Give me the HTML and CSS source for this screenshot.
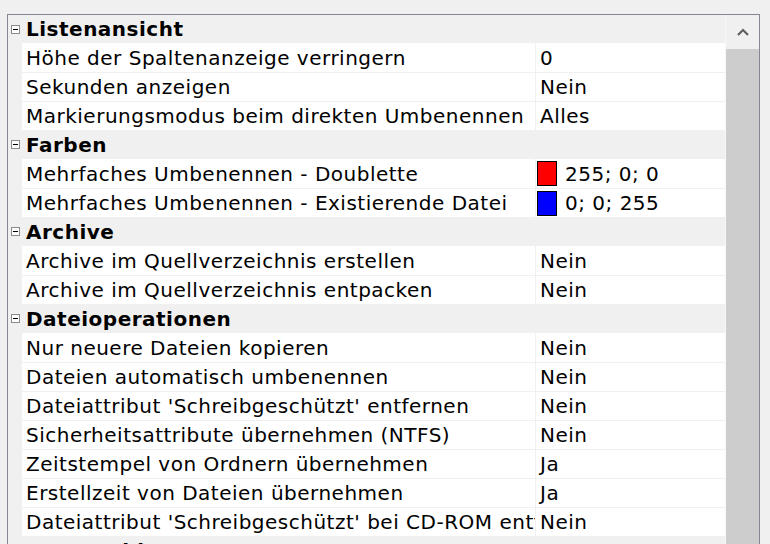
FILE: index.html
```html
<!DOCTYPE html>
<html lang="de">
<head>
<meta charset="utf-8">
<title>Eigenschaften</title>
<link rel="stylesheet" href="styles.css">
</head>
<body>
<div class="panel">
  <div class="grid">
    <div class="cat first"><span class="toggle"></span><span class="cat-label">Listenansicht</span></div>
    <div class="row"><div class="name">Höhe der Spaltenanzeige verringern</div><div class="val">0</div></div>
    <div class="row"><div class="name">Sekunden anzeigen</div><div class="val">Nein</div></div>
    <div class="row"><div class="name">Markierungsmodus beim direkten Umbenennen</div><div class="val">Alles</div></div>

    <div class="cat"><span class="toggle"></span><span class="cat-label">Farben</span></div>
    <div class="row"><div class="name">Mehrfaches Umbenennen - Doublette</div><div class="val color"><span class="swatch red"></span>255; 0; 0</div></div>
    <div class="row"><div class="name">Mehrfaches Umbenennen - Existierende Datei</div><div class="val color"><span class="swatch blue"></span>0; 0; 255</div></div>

    <div class="cat"><span class="toggle"></span><span class="cat-label">Archive</span></div>
    <div class="row"><div class="name">Archive im Quellverzeichnis erstellen</div><div class="val">Nein</div></div>
    <div class="row"><div class="name">Archive im Quellverzeichnis entpacken</div><div class="val">Nein</div></div>

    <div class="cat"><span class="toggle"></span><span class="cat-label">Dateioperationen</span></div>
    <div class="row"><div class="name">Nur neuere Dateien kopieren</div><div class="val">Nein</div></div>
    <div class="row"><div class="name">Dateien automatisch umbenennen</div><div class="val">Nein</div></div>
    <div class="row"><div class="name">Dateiattribut 'Schreibgeschützt' entfernen</div><div class="val">Nein</div></div>
    <div class="row"><div class="name">Sicherheitsattribute übernehmen (NTFS)</div><div class="val">Nein</div></div>
    <div class="row"><div class="name">Zeitstempel von Ordnern übernehmen</div><div class="val">Ja</div></div>
    <div class="row"><div class="name">Erstellzeit von Dateien übernehmen</div><div class="val">Ja</div></div>
    <div class="row"><div class="name">Dateiattribut 'Schreibgeschützt' bei CD-ROM entfernen</div><div class="val">Nein</div></div>

    <div class="cat"><span class="toggle"></span><span class="cat-label">Warnmeldungen</span></div>
  </div>
  <div class="scrollbar">
    <div class="arrow">
      <svg width="12" height="8" viewBox="0 0 12 8"><path d="M1 7 L6 2 L11 7" fill="none" stroke="#606060" stroke-width="2.2"/></svg>
    </div>
    <div class="thumb"></div>
  </div>
</div>
</body>
</html>
```
FILE: styles.css
```css
html, body {
  margin: 0;
  padding: 0;
  background: #f0f0f0;
  overflow: hidden;
  height: 544px;
}
body {
  font-family: "DejaVu Sans", Verdana, sans-serif;
  font-size: 20px;
  letter-spacing: 0.5px;
  color: #000;
}
.panel {
  margin: 14px 0 0 7px;
  width: 751px;
  height: 600px;
  border: 1px solid #828790;
  display: flex;
  background: #f0f0f0;
}
.grid {
  width: 717px;
  display: flex;
  flex-direction: column;
  flex: none;
}
.cat {
  height: 29px;
  flex: none;
  display: flex;
  align-items: center;
  background: #f0f0f0;
}
.cat.first {
  height: 28px;
}
.toggle {
  width: 7px;
  height: 7px;
  margin: 0 6px 0 3px;
  border: 1px solid #8c8c8c;
  background: #fdfdfd;
  position: relative;
  flex: none;
}
.toggle::after {
  content: "";
  position: absolute;
  left: 1px;
  right: 1px;
  top: 3px;
  height: 1px;
  background: #000;
}
.cat-label {
  font-weight: bold;
}
.row {
  height: 29px;
  box-sizing: border-box;
  flex: none;
  display: flex;
  padding-left: 14px;
  background: #f0f0f0;
}
.row + .row {
  border-top: 1px solid #f0f0f0;
}
.name {
  width: 513px;
  box-sizing: border-box;
  padding-left: 4px;
  background: #fff;
  white-space: nowrap;
  overflow: hidden;
  display: flex;
  align-items: center;
}
.val {
  width: 189px;
  margin-left: 1px;
  box-sizing: border-box;
  padding-left: 4px;
  background: #fff;
  white-space: nowrap;
  overflow: hidden;
  display: flex;
  align-items: center;
}
.val.color {
  padding-left: 1px;
}
.swatch {
  width: 18px;
  height: 23px;
  border: 1px solid #000;
  margin-right: 8px;
  flex: none;
}
.swatch.red { background: #ff0000; }
.swatch.blue { background: #0000ff; }
.scrollbar {
  width: 34px;
  flex: none;
  display: flex;
  flex-direction: column;
  background: #f0f0f0;
  border-left: 1px solid #f8f8f8;
  box-sizing: border-box;
}
.arrow {
  height: 34px;
  display: flex;
  align-items: center;
  justify-content: center;
}
.thumb {
  flex: 1;
  background: #cdcdcd;
}
```
